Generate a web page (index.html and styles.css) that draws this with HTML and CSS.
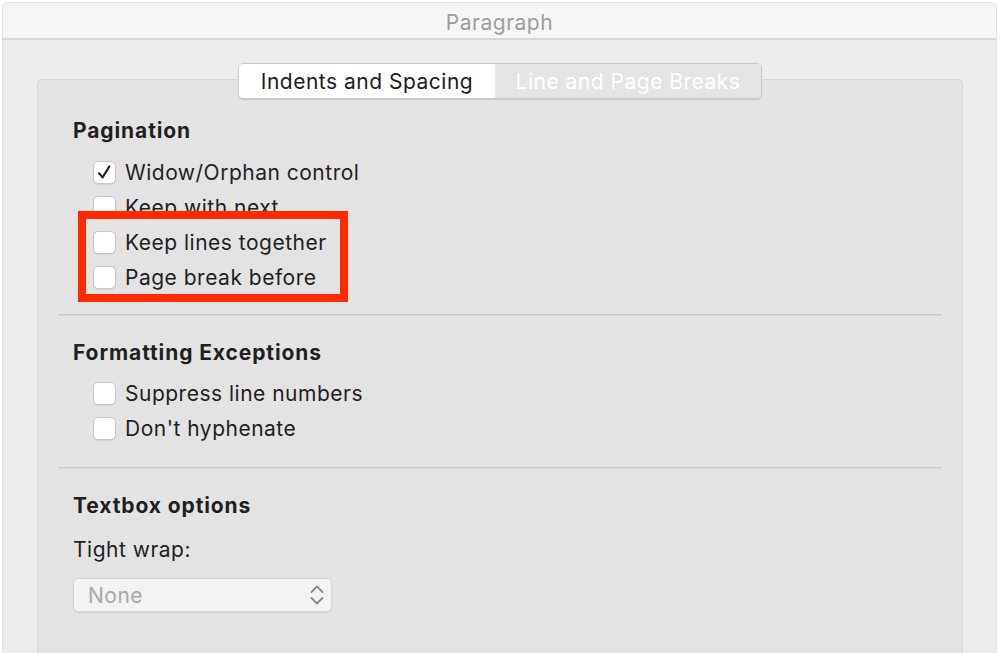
FILE: index.html
```html
<!DOCTYPE html>
<html>
<head>
<meta charset="utf-8">
<link rel="stylesheet" href="styles.css">
</head>
<body>
<div class="window">
  <div class="titlebar">Paragraph</div>
  <div class="panel">
    <div class="tabs">
      <div class="tab tab-active">Indents and Spacing</div>
      <div class="tab tab-inactive">Line and Page Breaks</div>
    </div>

    <div class="section section-pagination">
      <div class="heading">Pagination</div>
      <div class="rows">
        <div class="row"><span class="box"><svg width="23" height="23" viewBox="0 0 23 23"><path d="M6 12.2 L9.6 16.4 L16.4 5.4" fill="none" stroke="#222" stroke-width="2.1" stroke-linecap="round" stroke-linejoin="round"/></svg></span><span class="label">Widow/Orphan control</span></div>
        <div class="row"><span class="box"></span><span class="label">Keep with next</span></div>
        <div class="row"><span class="box"></span><span class="label">Keep lines together</span></div>
        <div class="row"><span class="box"></span><span class="label">Page break before</span></div>
      </div>
      <div class="highlight"></div>
    </div>

    <div class="separator"></div>

    <div class="section section-exceptions">
      <div class="heading">Formatting Exceptions</div>
      <div class="rows">
        <div class="row"><span class="box"></span><span class="label">Suppress line numbers</span></div>
        <div class="row"><span class="box"></span><span class="label">Don't hyphenate</span></div>
      </div>
    </div>

    <div class="separator separator-2"></div>

    <div class="section section-textbox">
      <div class="heading">Textbox options</div>
      <div class="field-label">Tight wrap:</div>
      <div class="select">
        <span class="select-value">None</span>
        <svg class="chevrons" width="16" height="24" viewBox="0 0 16 24"><path d="M2.5 9 L8 3.5 L13.5 9" fill="none" stroke="#8a8a8a" stroke-width="1.8" stroke-linecap="round" stroke-linejoin="round"/><path d="M2.5 15 L8 20.5 L13.5 15" fill="none" stroke="#8a8a8a" stroke-width="1.8" stroke-linecap="round" stroke-linejoin="round"/></svg>
      </div>
    </div>
  </div>
</div>
</body>
</html>
```

FILE: styles.css
```css
* { box-sizing: border-box; }

html, body {
  margin: 0;
  padding: 0;
  background: #ffffff;
  width: 1000px;
  height: 653px;
  overflow: hidden;
}

body {
  font-family: "Inter", "Noto Sans", sans-serif;
  color: #1f1f1f;
  padding: 2px 3px 0 2px;
}

.window {
  width: 995px;
  height: 660px;
  background: #ececec;
  border-radius: 6px 6px 0 0;
  border: 1px solid #e2e2e2;
  border-bottom: none;
  overflow: hidden;
}

.titlebar {
  height: 37px;
  background: #f6f6f6;
  border-bottom: 2px solid #d7d7d7;
  display: flex;
  align-items: center;
  justify-content: center;
  font-size: 21px;
  letter-spacing: 0.5px;
  color: #9c9c9c;
  padding-top: 3px;
}

.panel {
  margin: 39px 0 0 34px;
  width: 926px;
  height: 600px;
  background: #e3e3e3;
  border: 1px solid #d6d6d6;
  border-bottom: none;
  border-radius: 5px 5px 0 0;
  padding: 0 20px;
}

.tabs {
  display: flex;
  width: 524px;
  height: 36px;
  margin: -17px auto 0 auto;
  border: 1px solid #c9c9c9;
  border-radius: 5px;
  overflow: hidden;
  box-shadow: 0 1px 1px rgba(0,0,0,0.12);
}

.tab {
  display: flex;
  align-items: center;
  justify-content: center;
  font-size: 21px;
  letter-spacing: 0.5px;
  height: 100%;
}

.tab-active {
  width: 256px;
  background: #ffffff;
  color: #1c1c1c;
}

.tab-inactive {
  flex: 1;
  background: #e4e4e4;
  color: #ffffff;
}

.section {
  padding-left: 15px;
}

.section-pagination {
  position: relative;
}

.heading {
  font-weight: 700;
  font-size: 21px;
  letter-spacing: 0.9px;
  line-height: 24px;
  height: 24px;
}

.section-pagination .heading { margin-top: 20px; }
.section-exceptions .heading { margin-top: 25px; }
.section-textbox .heading { margin-top: 25px; }

.rows {
  margin-top: 12px;
  padding-left: 20px;
}

.section-exceptions .rows { margin-top: 11px; }

.row {
  height: 35px;
  display: flex;
  align-items: center;
}

.box {
  width: 23px;
  height: 23px;
  border-radius: 5px;
  background: #ffffff;
  border: 1px solid #c6c6c6;
  box-shadow: 0 1px 0 rgba(0,0,0,0.06);
  margin-right: 9px;
  flex-shrink: 0;
  display: flex;
  align-items: center;
  justify-content: center;
}

.box svg { display: block; margin: -1px; }

.label {
  font-size: 21px;
  letter-spacing: 0.5px;
  line-height: 24px;
  color: #1f1f1f;
}

.highlight {
  position: absolute;
  left: 20px;
  top: 92px;
  width: 270px;
  height: 91px;
  border: 8px solid #ff2a00;
}

.separator {
  margin-top: 19px;
  height: 2px;
  border-top: 1px solid #c9c9c9;
  border-bottom: 1px solid #d7d7d7;
}

.separator-2 { margin-top: 21px; }

.field-label {
  margin-top: 20px;
  font-size: 21px;
  letter-spacing: 0.5px;
  line-height: 24px;
  height: 24px;
}

.select {
  margin-top: 16px;
  width: 259px;
  height: 34px;
  background: #f2f2f2;
  border: 1px solid #d5d5d5;
  border-radius: 5px;
  box-shadow: 0 1px 1px rgba(0,0,0,0.08);
  display: flex;
  align-items: center;
  justify-content: space-between;
  padding: 0 6px 0 14px;
}

.select-value {
  font-size: 21px;
  letter-spacing: 0.5px;
  color: #a8a8a8;
}

.chevrons { display: block; }
```
